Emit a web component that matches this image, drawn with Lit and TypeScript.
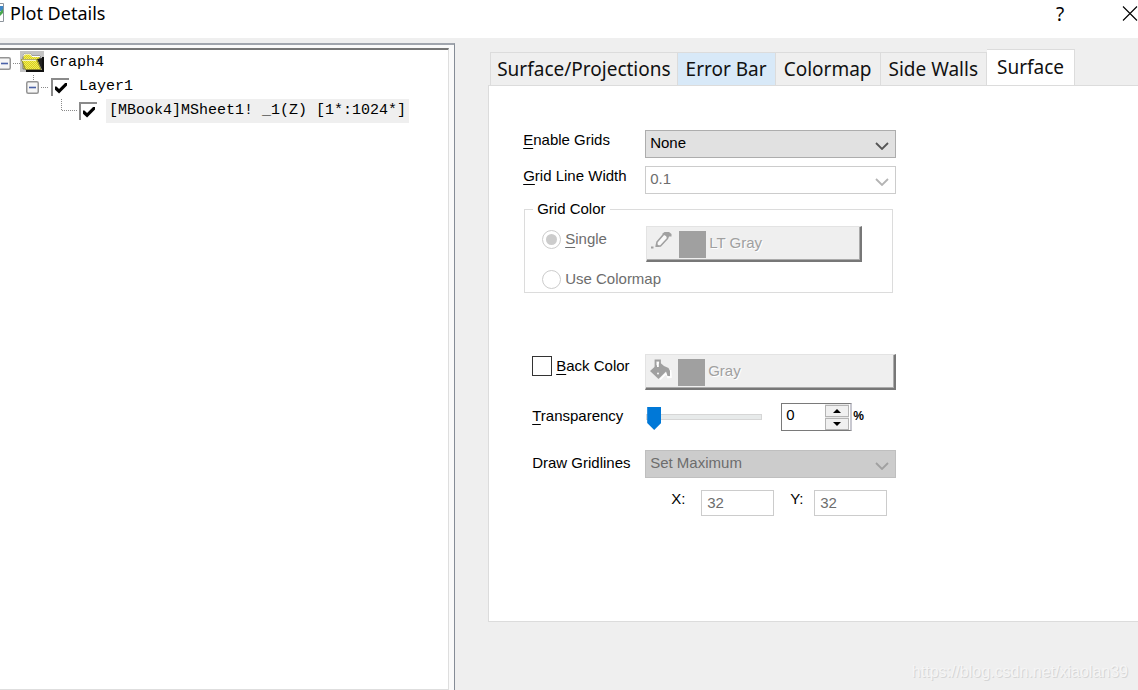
import { LitElement, html, css, svg } from "lit";
import { customElement, property, state } from "lit/decorators.js";

const chevron = html`<svg class="chevron" width="14" height="8" viewBox="0 0 14 8" aria-hidden="true">
  <path d="M1 1 L7 7 L13 1" fill="none" stroke="currentColor" stroke-width="1.8" />
</svg>`;

const pencil = svg`<svg width="22" height="18" viewBox="0 0 22 18" aria-hidden="true">
  <path d="M0 16.5h2.5" stroke="#a0a0a0" stroke-width="2" />
  <path d="M5.5 15 L6 11 L13 3 L17 4 L16.5 7.5 L9.5 15 Z" fill="#f8f8f8" stroke="#a0a0a0" stroke-width="1.6" />
  <path d="M11 3 L13.5 1 H18 L20.5 3 V5.5 H18 L16.5 8 L15 5 Z" fill="#a0a0a0" />
  <path d="M4.5 16 L5 12 L9 16 Z" fill="#a0a0a0" />
</svg>`;

const bucket = svg`<svg width="22" height="22" viewBox="0 0 22 22" aria-hidden="true">
  <path d="M20.5 11 L21 18 L18 18.5 L16.5 14 L10 20.5" fill="none" stroke="#fff" stroke-width="1.6" />
  <path d="M5.5 8 V1.5 H10 V6" fill="none" stroke="#a0a0a0" stroke-width="1.8" />
  <path d="M0 12 L5 7.5 L10 3.5 L14 7 L18.5 9 L20 12 V17 L17.5 17 L16 12.5 L8.5 20 Z" fill="#a0a0a0" />
  <path d="M7 3 H8.8 V8 H7 Z" fill="#fff" />
  <circle cx="8" cy="14.5" r="0.9" fill="#fff" />
</svg>`;

const folder = svg`<svg width="24" height="24" viewBox="0 0 24 24" aria-hidden="true">
  <defs>
    <pattern id="weave" width="2" height="2" patternUnits="userSpaceOnUse">
      <rect width="2" height="2" fill="#f2ee58" />
      <rect width="1" height="1" fill="#d8cf20" />
      <rect x="1" y="1" width="1" height="1" fill="#d8cf20" />
    </pattern>
  </defs>
  <rect width="24" height="21" fill="#c4c4c4" />
  <path d="M22 6h2v15H6v-2h16z" fill="#111" />
  <path d="M3 18 V5 L5 2.5 H10 L12 5 H20 V8 V18 Z" fill="url(#weave)" stroke="#777" />
  <path d="M3 5.5 L5 3 H10 L12 5.5 H20" fill="none" stroke="#fff" />
  <path d="M17 8 L22 19 V7 Z" fill="#222" />
  <path d="M1.5 8.5 H16.5 L21 18.5 H5.5 Z" fill="url(#weave)" stroke="#8b8730" />
  <path d="M2 9.2 H16" stroke="#fff" />
</svg>`;

@customElement("color-button")
class ColorButton extends LitElement {
  @property() name = "";
  @property() icon = "pencil";

  static styles = css`
    :host { display: block; }
    .btn {
      display: flex; align-items: flex-start; width: 100%; height: 36px; margin: 0;
      padding: 4px 4px 0 4px; box-sizing: border-box; border: 1px solid #e3e3e3;
      border-right: 2px solid #777; border-bottom: 2px solid #777;
      background: #efefef; box-shadow: inset -1px -1px #ababab;
      font: 15px/18px "Liberation Sans", Arial, sans-serif; color: #a0a0a0;
      text-shadow: 1px 1px #fff; text-align: left;
    }
    .icon { width: 28px; height: 22px; flex: none; }
    .swatch { width: 27px; height: 27px; background: #a0a0a0; flex: none; margin-right: 3px; }
    .name { padding-top: 3px; }
  `;

  render() {
    return html`<button class="btn" type="button" disabled aria-label=${this.name}>
      <span class="icon">${this.icon === "pencil" ? pencil : bucket}</span>
      <span class="swatch"></span><span class="name">${this.name}</span>
    </button>`;
  }
}

@customElement("plot-tree")
class PlotTree extends LitElement {
  static styles = css`
    :host { display: block; padding-top: 1px; font: 15px/24px "Liberation Mono", "Courier New", monospace; color: #000; }
    .tree, .branch { list-style: none; margin: 0; padding: 0; }
    .row { display: flex; height: 24px; align-items: center; white-space: nowrap; }
    .toggle { border: 0; padding: 0; margin: 0; background: none; height: 24px; display: block; }
    svg { display: block; flex: none; }
    .guide { stroke: #8a8a8a; stroke-dasharray: 1 1; fill: none; }
    .icon { margin-right: 6px; }
    .item { display: flex; align-items: center; }
    .check {
      appearance: none; margin: 0; width: 18px; height: 18px; background: #fff;
      border: 0 solid #8a8a8a; border-width: 2px 0 0 2px; display: grid; place-items: center;
    }
    .check:checked::before {
      content: ""; width: 12px; height: 11px; background: #000;
      clip-path: polygon(0 36%, 12% 36%, 34% 58%, 88% 0, 100% 0, 100% 28%, 34% 100%, 0 66%);
    }
    .text { padding-left: 10px; }
    .selected { margin-left: 9px; padding: 0 3px; background: #efefef; }
  `;

  render() {
    const box = (x: number) => svg`
      <rect x=${x + 0.75} y="6.75" width="11.5" height="11.5" rx="1.5" fill="#f6f6f6" stroke="#949494" stroke-width="1.5" />
      <path d="M${x + 3} 12.5 h7" stroke="#4b62a8" stroke-width="1.6" />`;
    return html`<ul class="tree">
      <li>
        <div class="row">
          <button class="toggle" type="button" aria-label="Collapse Graph4">
            <svg width="20" height="24" viewBox="0 0 20 24">${box(-2)}<path class="guide" d="M13 12.5h7" /></svg>
          </button>
          <span class="icon">${folder}</span><span>Graph4</span>
        </div>
        <ul class="branch">
          <li>
            <div class="row">
              <svg width="26" height="24"></svg>
              <button class="toggle" type="button" aria-label="Collapse Layer1">
                <svg width="25" height="24" viewBox="0 0 25 24"><path class="guide" d="M7.5 0v6M15 12.5h8" />${box(0)}</svg>
              </button>
              <label class="item"><input class="check" type="checkbox" checked /><span class="text">Layer1</span></label>
            </div>
            <ul class="branch">
              <li class="row">
                <svg width="79" height="24" viewBox="0 0 79 24"><path class="guide" d="M61.5 0v12M62 11.5h16" /></svg>
                <label class="item"><input class="check" type="checkbox" checked /><span class="selected">[MBook4]MSheet1! _1(Z) [1*:1024*]</span></label>
              </li>
            </ul>
          </li>
        </ul>
      </li>
    </ul>`;
  }
}

@customElement("surface-form")
class SurfaceForm extends LitElement {
  @state() private transparency = 0;

  static styles = css`
    :host { display: block; font: 15px/20px "Liberation Sans", Arial, sans-serif; color: #000; }
    .form { max-width: 373px; margin: 0; }
    .row { display: grid; grid-template-columns: 122px minmax(0, 1fr); margin-bottom: 8px; }
    .indent { padding-left: 9px; }
    u { text-underline-offset: 3px; text-decoration-thickness: 1px; }
    .combo { display: grid; grid-template-columns: 1fr 26px; align-items: center; color: #555; }
    .combo select {
      grid-area: 1 / 1 / 2 / 3; appearance: none; width: 100%; height: 28px; box-sizing: border-box;
      margin: 0; padding: 0 28px 3px 4px; border: 1px solid #adadad; border-radius: 0;
      background: #e1e1e1; color: #000; font: inherit; opacity: 1;
    }
    .chevron { grid-area: 1 / 2 / 2 / 3; margin: 3px 0 0 5px; pointer-events: none; }
    .combo.plain { color: #b4b4b4; }
    .combo.plain select { background: #fff; border-color: #ccc; color: #6d6d6d; }
    .combo.off { color: #a0a0a0; }
    .combo.off select { background: #ccc; border-color: #bfbfbf; color: #6d6d6d; }
    .group { margin: 0 3px 0 1px; padding: 8px 30px 4px 17px; border: 1px solid #dcdcdc; min-width: 0; }
    .group legend { padding: 0 4px; margin-left: -9px; line-height: 18px; }
    .choices { display: grid; grid-template-columns: 104px minmax(0, 1fr); grid-template-rows: 36px 26px; row-gap: 4px; margin-bottom: -4px; }
    .choice { display: flex; align-items: center; gap: 4px; color: #6d6d6d; height: 26px; white-space: nowrap; }
    .radio {
      appearance: none; width: 19px; height: 19px; margin: 0; border: 1px solid #ccc; border-radius: 50%;
      box-sizing: border-box; display: grid; place-items: center; background: #fff; flex: none;
    }
    .radio:checked::before { content: ""; width: 11px; height: 11px; border-radius: 50%; background: #ccc; }
    .back { margin-top: 61px; margin-bottom: 13px; }
    .tick { display: flex; gap: 4px; align-items: flex-start; padding-top: 2px; }
    .box { appearance: none; width: 20px; height: 20px; margin: 0; border: 1px solid #333; background: #fff; box-sizing: border-box; flex: none; }
    .level { display: flex; align-items: flex-start; margin-bottom: 11px; }
    .field-label { padding-top: 3px; }
    .slider { appearance: none; background: none; width: 116px; height: 24px; margin: 2px 19px 0 1px; }
    .slider::-webkit-slider-runnable-track { height: 6px; box-sizing: border-box; border: 1px solid #d6d6d6; background: #e7eaea; }
    .slider::-webkit-slider-thumb {
      appearance: none; width: 14px; height: 23px; margin-top: -8px; background: #0078d7;
      clip-path: polygon(0 0, 100% 0, 100% 70%, 50% 100%, 0 70%);
    }
    .spin {
      display: grid; grid-template-columns: 43px 24px; width: 71px; height: 28px; box-sizing: border-box;
      border: 1px solid #7a7a7a; border-right: 2px solid #c8c8d0; flex: none;
    }
    .spin input { border: 0; padding: 0 0 4px 4px; margin: 0; min-width: 0; font: inherit; color: #000; background: #fff; appearance: textfield; }
    .spin input::-webkit-inner-spin-button { appearance: none; margin: 0; }
    .steps { display: grid; grid-template-rows: 12px 12px; gap: 1px; background: #e8e8e8; padding-top: 1px; }
    .step { padding: 0; margin: 0; border: 1px solid #b4b4b4; background: #f0f0f0; display: grid; place-items: center; }
    .percent { font: bold 12px/26px "Liberation Sans", Arial, sans-serif; padding-left: 1px; }
    .pair { display: flex; align-items: flex-start; margin: 12px 0 0 148px; line-height: 18px; }
    .pair label { width: 30px; }
    .pair .second { margin-left: 16px; width: 24px; }
    .pair input {
      width: 73px; height: 26px; box-sizing: border-box; border: 1px solid #ccc; padding: 0 4px 2px 5px;
      font: inherit; color: #6d6d6d; background: #fff; margin: 0;
    }
    .gap { margin-bottom: 6px; }
  `;

  private step(by: number) {
    this.transparency = Math.min(100, Math.max(0, this.transparency + by));
  }

  render() {
    return html`<form class="form">
      <div class="row">
        <label for="grids"><u>E</u>nable Grids</label>
        <div class="combo"><select id="grids"><option>None</option></select>${chevron}</div>
      </div>
      <div class="row gap">
        <label for="width"><u>G</u>rid Line Width</label>
        <div class="combo plain"><select id="width" disabled><option>0.1</option></select>${chevron}</div>
      </div>
      <fieldset class="group">
        <legend>Grid Color</legend>
        <div class="choices">
          <label class="choice"><input class="radio" type="radio" name="color" checked disabled /><span><u>S</u>ingle</span></label>
          <color-button name="LT Gray" icon="pencil"></color-button>
          <label class="choice"><input class="radio" type="radio" name="color" disabled />Use Colormap</label>
        </div>
      </fieldset>
      <div class="row back">
        <label class="indent tick"><input class="box" type="checkbox" /><span><u>B</u>ack Color</span></label>
        <color-button name="Gray" icon="bucket"></color-button>
      </div>
      <div class="row">
        <label class="indent field-label" for="transparency"><u>T</u>ransparency</label>
        <div class="level">
          <input id="transparency" class="slider" type="range" min="0" max="100" .value=${String(this.transparency)}
            @input=${(e: Event) => (this.transparency = Number((e.target as HTMLInputElement).value))} />
          <div class="spin">
            <input type="number" aria-label="Transparency percent" .value=${String(this.transparency)}
              @change=${(e: Event) => (this.transparency = Number((e.target as HTMLInputElement).value))} />
            <div class="steps">
              <button class="step" type="button" aria-label="Increase" @click=${() => this.step(1)}>
                <svg width="8" height="4"><path d="M0 4L4 0L8 4z" /></svg>
              </button>
              <button class="step" type="button" aria-label="Decrease" @click=${() => this.step(-1)}>
                <svg width="8" height="4"><path d="M0 0L4 4L8 0z" /></svg>
              </button>
            </div>
          </div>
          <span class="percent">%</span>
        </div>
      </div>
      <div class="row">
        <label class="indent field-label" for="lines">Draw Gridlines</label>
        <div class="combo off"><select id="lines" disabled><option>Set Maximum</option></select>${chevron}</div>
      </div>
      <div class="pair">
        <label for="x">X:</label><input id="x" value="32" disabled />
        <label class="second" for="y">Y:</label><input id="y" value="32" disabled />
      </div>
    </form>`;
  }
}

@customElement("app-root")
class AppRoot extends LitElement {
  static styles = css`
    :host {
      display: flex; flex-direction: column; min-height: 100vh; position: relative; background: #efefef;
      color: #000; overflow: hidden;
    }
    .title { display: flex; height: 38px; background: #fff; align-items: flex-start; }
    .app-icon { display: block; margin: 3px 5px 0 0; }
    .name { margin: 0; flex: 1; font: 18px/26px "Noto Sans", sans-serif; }
    .win { border: 0; background: none; padding: 0; margin: 0; height: 28px; font: 19px/28px "Noto Sans", sans-serif; }
    .help { width: 16px; margin-right: 54px; }
    .win svg { display: block; }
    .main { flex: 1; display: flex; }
    .side {
      flex: 0 0 40%; box-sizing: border-box; margin-top: 5px; padding: 3px 5px 0 0; background: #fafafa;
      border-top: 2px solid #a0a5ad; border-right: 1px solid #858c96; display: flex;
    }
    .well { flex: 1; background: #fff; border-top: 2px solid #767676; border-right: 1px solid #dedede; border-bottom: 1px solid #dedede; }
    .content { flex: 1; min-width: 0; padding: 12px 0 68px 33px; display: flex; flex-direction: column; }
    .tabs { display: flex; align-items: flex-end; padding-left: 2px; height: 36px; margin-bottom: -1px; }
    .tab {
      height: 34px; box-sizing: border-box; border: 1px solid #dcdcdc; border-left-width: 0; margin: 0; padding: 0 8px;
      background: #efefef; font: 19px/32px "Noto Sans", sans-serif; color: #111; white-space: nowrap;
    }
    .tab:first-child { border-left-width: 1px; padding: 0 6px; }
    .hover { background: #d8e9f8; }
    .active { height: 37px; background: #fff; border-bottom-color: #fff; padding: 0 10px 2px; }
    .page { flex: 1; background: #fff; border: 1px solid #dcdcdc; border-right: 0; padding: 44px 0 0 34px; }
    .mark {
      position: absolute; right: 10px; bottom: 8px; font: 16px/20px "Liberation Sans", Arial, sans-serif;
      color: #f5f5f5; text-shadow: 1px 1px #d6d6d6;
    }
  `;

  render() {
    return html`
      <header class="title">
        <svg class="app-icon" width="5" height="20" viewBox="0 0 5 20" aria-hidden="true">
          <path d="M0 .5H3.5V18.5H0" fill="#fff" stroke="#8d949c" />
          <path d="M0 3h3v5H0z" fill="#3e87c8" /><path d="M0 9l3-3v4l-3 3z" fill="#49a84d" />
        </svg>
        <h1 class="name">Plot Details</h1>
        <button class="win help" type="button" aria-label="Help">?</button>
        <button class="win" type="button" aria-label="Close">
          <svg width="16" height="28" viewBox="0 0 16 28"><path d="M1 6.5L15 20.5M15 6.5L1 20.5" stroke="#000" stroke-width="1.1" /></svg>
        </button>
      </header>
      <main class="main">
        <section class="side"><div class="well"><plot-tree></plot-tree></div></section>
        <section class="content">
          <div class="tabs" role="tablist">
            <button class="tab" role="tab">Surface/Projections</button>
            <button class="tab hover" role="tab">Error Bar</button>
            <button class="tab" role="tab">Colormap</button>
            <button class="tab" role="tab">Side Walls</button>
            <button class="tab active" role="tab" aria-selected="true">Surface</button>
          </div>
          <div class="page" role="tabpanel"><surface-form></surface-form></div>
        </section>
      </main>
      <span class="mark">https://blog.csdn.net/xiaolan39</span>
    `;
  }
}
